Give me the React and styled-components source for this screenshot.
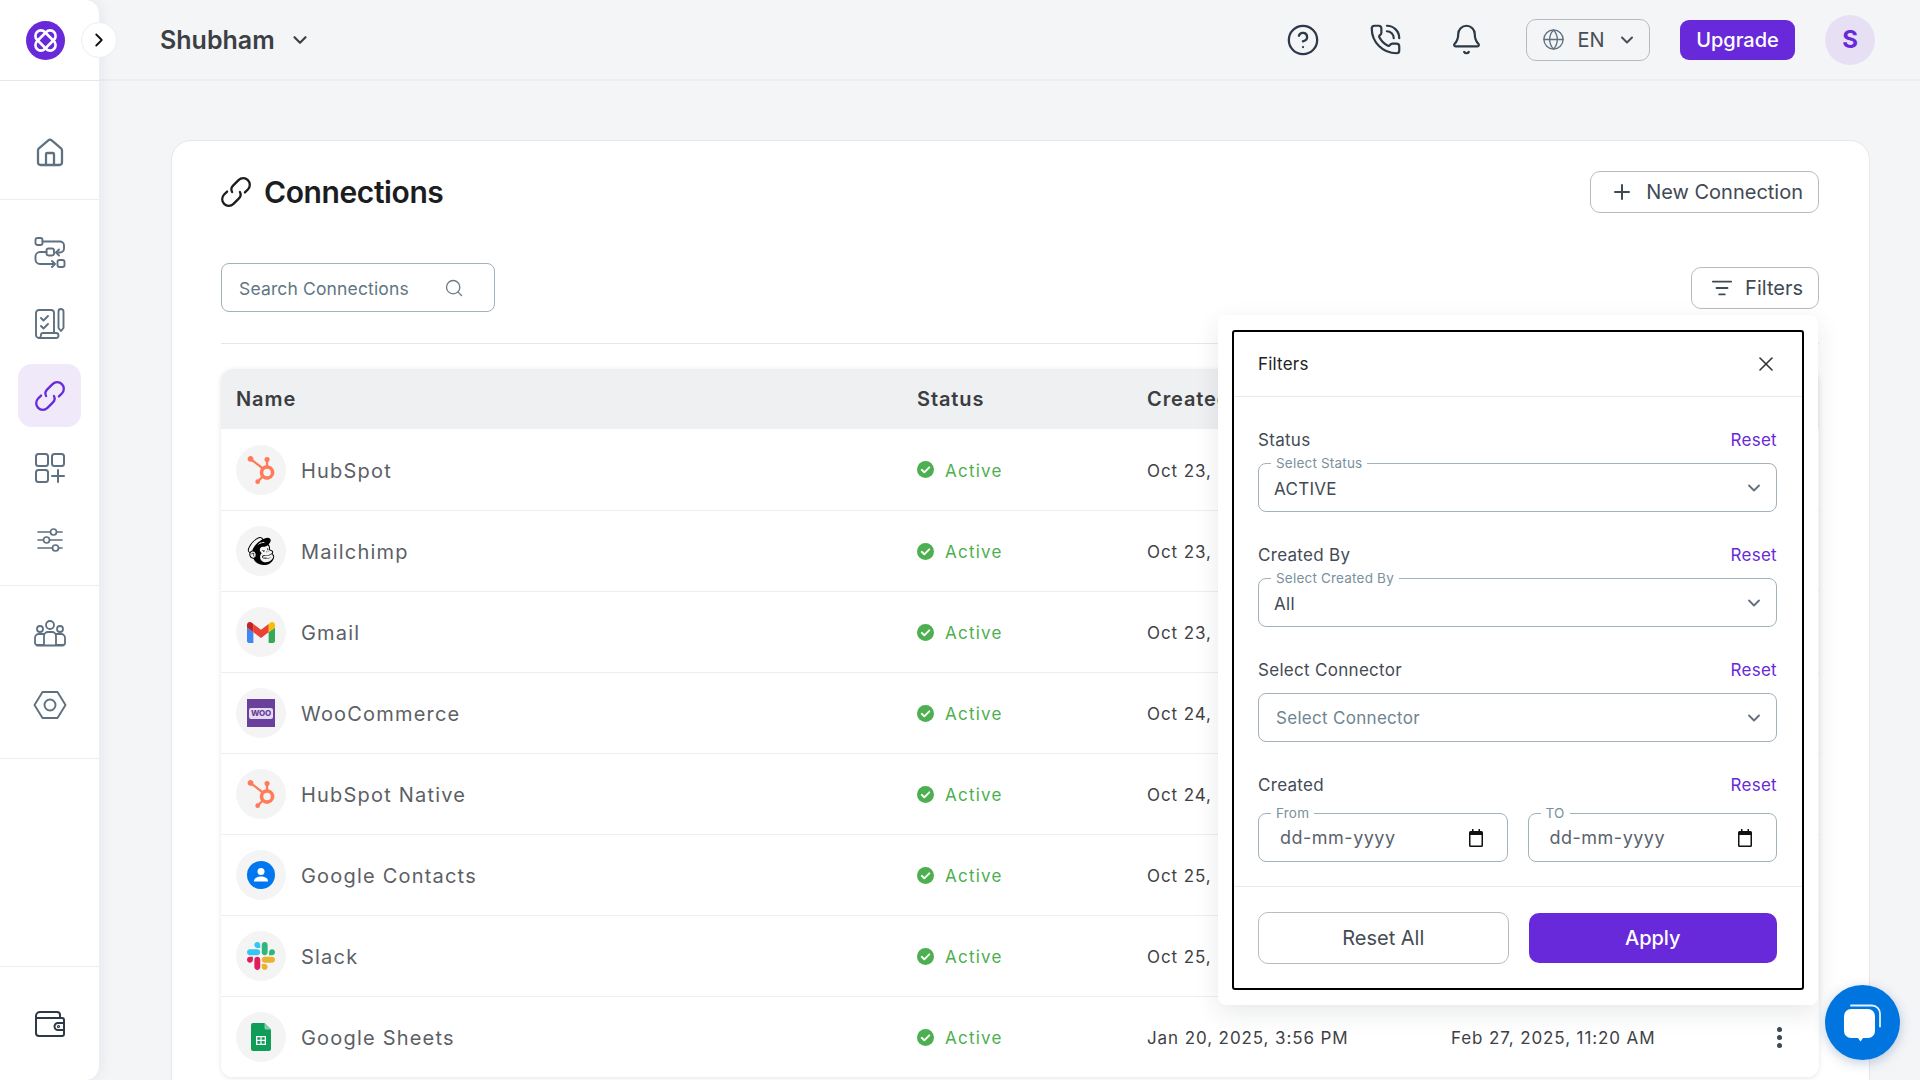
import React from "react";
import styled, { createGlobalStyle } from "styled-components";
import {
  Bell,
  ChevronDown,
  ChevronRight,
  CircleHelp,
  Globe,
  House,
  ListFilter,
  PhoneCall,
  Plus,
  Search,
  X,
} from "lucide-react";
import { SiHubspot, SiMailchimp } from "react-icons/si";

const purple = "#6729d9";
const slate = "#5f7080";

const GlobalStyle = createGlobalStyle`
  html, body {
    margin: 0;
    padding: 0;
    height: 100%;
    overflow: hidden;
  }
  body {
    background: #f4f5f7;
    font-family: "Inter", "Noto Sans", "Liberation Sans", sans-serif;
  }
  * { box-sizing: border-box; }
`;

const ChainIcon = () => (
  <svg width="30" height="30" viewBox="3.5 3.5 25 25" fill="none" stroke="currentColor" strokeWidth="1.9" strokeLinecap="round" strokeLinejoin="round">
    <g transform="rotate(-45 16 16)">
      <path d="M11 10.500H7.500a5.500 5.500 0 0 0 0 11H14a4.500 4.500 0 0 0 4.300-3.200" />
      <path d="M21 21.500h3.500a5.500 5.500 0 0 0 0-11H18a4.500 4.500 0 0 0-4.300 3.200" />
    </g>
  </svg>
);

const FlowIcon = () => (
  <svg width="32" height="32" viewBox="0 0 32 32" fill="none" stroke="currentColor" strokeWidth="1.9" strokeLinecap="round" strokeLinejoin="round">
    <rect x="1.5" y="2" width="7" height="7" rx="2" />
    <path d="M8.5 5.5H26a4 4 0 0 1 4 4v3a4 4 0 0 1-4 4h-3" />
    <path d="m25 13.5-3 3 3 3" />
    <rect x="12.5" y="12.5" width="7.500" height="7" rx="2" />
    <path d="M12.500 16H6a4.500 4.500 0 0 0-4.500 4.500v3A4.500 4.500 0 0 0 6 28h14" />
    <path d="m18 25 3 3-3 3" />
    <rect x="23.500" y="24" width="7" height="7" rx="2" />
  </svg>
);

const ChecklistIcon = () => (
  <svg width="30" height="32" viewBox="0 0 30 32" fill="none" stroke="currentColor" strokeWidth="1.9" strokeLinecap="round" strokeLinejoin="round">
    <path d="M4 30a3 3 0 0 1-3-3V5a3 3 0 0 1 3-3h12a3 3 0 0 1 3 3v20" />
    <path d="M4 30h17a2 2 0 0 0 0-5H8a2 2 0 0 0-2 2c0 1.500-1 3-2 3Z" />
    <path d="m6 10 2.500 2.500L13 8" />
    <path d="m6 18 2.500 2.500L13 16" />
    <path d="M23.500 3.500a2.500 2.500 0 0 1 5 0V20l-2.500 3-2.500-3Z" />
  </svg>
);

const AppsIcon = () => (
  <svg width="32" height="32" viewBox="0 0 32 32" fill="none" stroke="currentColor" strokeWidth="2" strokeLinecap="round" strokeLinejoin="round">
    <rect x="2" y="2" width="12" height="12" rx="2.500" />
    <rect x="18" y="2" width="12" height="12" rx="2.500" />
    <rect x="2" y="18" width="12" height="12" rx="2.500" />
    <path d="M24 18v12M18 24h12" />
  </svg>
);

const TuneIcon = () => (
  <svg width="26" height="26" viewBox="0 0 26 26" fill="none" stroke="currentColor" strokeWidth="1.7" strokeLinecap="round">
    <path d="M1 5h12M20 5h5M1 13h5M13 13h12M1 21h14M22 21h3" />
    <circle cx="16.500" cy="5" r="3" />
    <circle cx="9.500" cy="13" r="3" />
    <circle cx="18.500" cy="21" r="3" />
  </svg>
);

const TeamIcon = () => (
  <svg width="32" height="28" viewBox="0 0 32 28" fill="none" stroke="currentColor" strokeWidth="1.8" strokeLinecap="round" strokeLinejoin="round">
    <circle cx="16" cy="6" r="4" />
    <circle cx="6" cy="10" r="3" />
    <circle cx="26" cy="10" r="3" />
    <path d="M10 26V17a4 4 0 0 1 4-4h4a4 4 0 0 1 4 4v9" />
    <path d="M10 26H3a2 2 0 0 1-2-2v-5a4 4 0 0 1 4-4h5" />
    <path d="M22 26h7a2 2 0 0 0 2-2v-5a4 4 0 0 0-4-4h-5" />
    <path d="M3 26.500h26" />
  </svg>
);

const HexIcon = () => (
  <svg width="34" height="30" viewBox="0 0 34 30" fill="none" stroke="currentColor" strokeWidth="1.900" strokeLinejoin="round">
    <path d="M9.500 2h15l8 13-8 13h-15l-8-13Z" />
    <circle cx="17" cy="15" r="5.500" />
  </svg>
);

const WalletIcon = () => (
  <svg width="32" height="28" viewBox="0 0 32 28" fill="none" stroke="#2b3a46" strokeWidth="2" strokeLinecap="round" strokeLinejoin="round">
    <path d="M2 8V6a4 4 0 0 1 4-4h17a3 3 0 0 1 3 3v3" />
    <path d="M2 7v16a3 3 0 0 0 3 3h23a2 2 0 0 0 2-2V10a2 2 0 0 0-2-2H3" />
    <path d="M30 13h-6a3.500 3.500 0 0 0 0 7h6" />
    <circle cx="24.500" cy="16.500" r="0.600" />
  </svg>
);

const GmailLogo = () => (
  <svg width="28" height="21" viewBox="52 42 88 66">
    <path fill="#4285f4" d="M58 108h14V74L52 59v43c0 3.320 2.690 6 6 6" />
    <path fill="#34a853" d="M120 108h14c3.320 0 6-2.690 6-6V59l-20 15" />
    <path fill="#fbbc04" d="M120 48v26l20-15v-8c0-7.420-8.470-11.650-14.400-7.200" />
    <path fill="#ea4335" d="M72 74V48l24 18 24-18v26L96 92" />
    <path fill="#c5221f" d="M52 51v8l20 15V48l-5.600-4.200c-5.940-4.450-14.400-.22-14.400 7.200" />
  </svg>
);

const ContactsLogo = () => (
  <svg width="28" height="28" viewBox="0 0 28 28">
    <circle cx="14" cy="14" r="14" fill="#0077f0" />
    <circle cx="14" cy="10.500" r="3.500" fill="#fff" />
    <path d="M7 20c0-3 3.500-4.500 7-4.500s7 1.500 7 4.500v.5H7Z" fill="#fff" />
  </svg>
);

const SlackLogo = () => (
  <svg width="28" height="28" viewBox="0 0 122.800 122.800">
    <path fill="#e01e5a" d="M25.800 77.600c0 7.100-5.800 12.900-12.900 12.900S0 84.700 0 77.600s5.800-12.900 12.900-12.900h12.900v12.900zm6.500 0c0-7.100 5.800-12.900 12.900-12.900s12.900 5.800 12.900 12.900v32.300c0 7.100-5.800 12.900-12.900 12.900s-12.900-5.800-12.900-12.900V77.600z" />
    <path fill="#36c5f0" d="M45.200 25.800c-7.100 0-12.900-5.800-12.900-12.900S38.100 0 45.200 0s12.900 5.800 12.900 12.900v12.900H45.200zm0 6.500c7.100 0 12.900 5.800 12.900 12.900s-5.800 12.900-12.900 12.900H12.900C5.800 58.100 0 52.300 0 45.200s5.800-12.900 12.900-12.900h32.300z" />
    <path fill="#2eb67d" d="M97 45.200c0-7.100 5.800-12.900 12.900-12.900s12.900 5.800 12.900 12.900-5.800 12.900-12.900 12.900H97V45.200zm-6.500 0c0 7.100-5.800 12.900-12.900 12.900s-12.900-5.800-12.900-12.900V12.900C64.700 5.800 70.500 0 77.600 0s12.900 5.800 12.900 12.900v32.300z" />
    <path fill="#ecb22e" d="M77.600 97c7.100 0 12.900 5.800 12.900 12.900s-5.800 12.900-12.900 12.900-12.900-5.800-12.900-12.900V97h12.900zm0-6.500c-7.100 0-12.900-5.800-12.900-12.900s5.800-12.900 12.900-12.900h32.300c7.100 0 12.900 5.800 12.900 12.900s-5.800 12.900-12.900 12.900H77.600z" />
  </svg>
);

const SheetsLogo = () => (
  <svg width="20" height="28" viewBox="0 0 20 28">
    <path d="M2 0h11.500L20 6.500V26a2 2 0 0 1-2 2H2a2 2 0 0 1-2-2V2a2 2 0 0 1 2-2Z" fill="#0f9d58" />
    <path d="M13.500 0 20 6.500h-5a1.500 1.500 0 0 1-1.500-1.500Z" fill="#87ceac" />
    <path d="M5 13h10v9H5Zm1.300 1.300v2.500h3.100v-2.500Zm4.300 0v2.500h3.100v-2.500Zm-4.300 3.700v2.700h3.100V18Zm4.300 0v2.700h3.100V18Z" fill="#fff" fillRule="evenodd" />
  </svg>
);

const BrandMark = () => (
  <svg width="39" height="39" viewBox="0 0 39 39">
    <circle cx="19.500" cy="19.500" r="19.500" fill={purple} />
    <g fill="none" stroke="#fff" strokeWidth="2.600">
      <rect x="14" y="7.500" width="11" height="24" rx="5.500" transform="rotate(45 19.500 19.500)" />
      <rect x="14" y="7.500" width="11" height="24" rx="5.500" transform="rotate(-45 19.500 19.500)" />
    </g>
  </svg>
);

const CalendarIcon = () => (
  <svg width="14" height="18" viewBox="0 0 14 18">
    <path d="M3 0h1.500v2h5V0H11v2h1.500A1.500 1.500 0 0 1 14 3.500v13a1.500 1.500 0 0 1-1.500 1.500h-11A1.500 1.500 0 0 1 0 16.500v-13A1.500 1.500 0 0 1 1.500 2H3Zm-1.500 6v10.500h11V6Z" fill="#111" />
  </svg>
);

const CheckBadge = () => (
  <svg width="17" height="17" viewBox="0 0 17 17">
    <circle cx="8.500" cy="8.500" r="8.500" fill="#4caf50" />
    <path d="m4.700 8.800 2.600 2.500 5-5" fill="none" stroke="#fff" strokeWidth="1.900" strokeLinecap="round" strokeLinejoin="round" />
  </svg>
);

const ChatIcon = () => (
  <svg width="40" height="40" viewBox="0 0 40 40">
    <path d="M8 2.500h21a8 8 0 0 1 8 8v13" fill="none" stroke="#fff" strokeWidth="1.800" strokeLinecap="round" opacity="0.9" />
    <path d="M8 6h17a7 7 0 0 1 7 7v15a7 7 0 0 1-7 7h-5l-2.500 3.500L15 35H8a7 7 0 0 1-7-7V13a7 7 0 0 1 7-7Z" fill="#fff" />
  </svg>
);

const HubspotLogo = () => <SiHubspot size={28} color="#ff7a59" />;
const MailchimpLogo = () => <SiMailchimp size={28} color="#000" />;
const WooLogo = () => (
  <WooTile>
    <WooBadge>WOO</WooBadge>
  </WooTile>
);

const connections = [
  { name: "HubSpot", Logo: HubspotLogo, created: "Oct 23, 2024, 11:02 AM", updated: "Feb 27, 2025, 11:20 AM" },
  { name: "Mailchimp", Logo: MailchimpLogo, created: "Oct 23, 2024, 11:14 AM", updated: "Feb 27, 2025, 11:20 AM" },
  { name: "Gmail", Logo: GmailLogo, created: "Oct 23, 2024, 4:31 PM", updated: "Feb 27, 2025, 11:20 AM" },
  { name: "WooCommerce", Logo: WooLogo, created: "Oct 24, 2024, 10:05 AM", updated: "Feb 27, 2025, 11:20 AM" },
  { name: "HubSpot Native", Logo: HubspotLogo, created: "Oct 24, 2024, 2:47 PM", updated: "Feb 27, 2025, 11:20 AM" },
  { name: "Google Contacts", Logo: ContactsLogo, created: "Oct 25, 2024, 9:40 AM", updated: "Feb 27, 2025, 11:20 AM" },
  { name: "Slack", Logo: SlackLogo, created: "Oct 25, 2024, 1:12 PM", updated: "Feb 27, 2025, 11:20 AM" },
  { name: "Google Sheets", Logo: SheetsLogo, created: "Jan 20, 2025, 3:56 PM", updated: "Feb 27, 2025, 11:20 AM" },
];

const App = () => {
  return (
    <Page>
      <GlobalStyle />
      <Sidebar>
        <BrandRow>
          <BrandMark />
          <CollapseButton>
            <ChevronRight size={22} color="#111" strokeWidth={2} />
          </CollapseButton>
        </BrandRow>
        <NavGroup $height={119} $top={40}>
          <NavItem><House size={32} strokeWidth={1.7} /></NavItem>
        </NavGroup>
        <NavGroup $height={386} $top={20}>
          <NavItem><FlowIcon /></NavItem>
          <NavItem><ChecklistIcon /></NavItem>
          <NavItem $active><ChainIcon /></NavItem>
          <NavItem><AppsIcon /></NavItem>
          <NavItem><TuneIcon /></NavItem>
        </NavGroup>
        <NavGroup $height={173} $top={15}>
          <NavItem><TeamIcon /></NavItem>
          <NavItem><HexIcon /></NavItem>
        </NavGroup>
        <SidebarSpacer />
        <WalletSlot>
          <WalletIcon />
        </WalletSlot>
      </Sidebar>

      <Main>
        <Topbar>
          <WorkspaceSwitch>
            Shubham
            <ChevronDown size={22} strokeWidth={2.4} />
          </WorkspaceSwitch>
          <TopActions>
            <TopIcon $width={85}><CircleHelp size={34} strokeWidth={1.6} /></TopIcon>
            <TopIcon $width={81}><PhoneCall size={33} strokeWidth={1.6} /></TopIcon>
            <TopIcon $width={80}><Bell size={33} strokeWidth={1.6} /></TopIcon>
            <LangSelect>
              <Globe size={23} strokeWidth={1.4} color={slate} />
              EN
              <ChevronDown size={20} strokeWidth={2.4} />
            </LangSelect>
            <UpgradeButton>Upgrade</UpgradeButton>
            <Avatar>S</Avatar>
          </TopActions>
        </Topbar>

        <Content>
          <Card>
            <TitleRow>
              <PageTitle>
                <ChainIcon />
                Connections
              </PageTitle>
              <OutlineButton>
                <Plus size={24} strokeWidth={2} />
                New Connection
              </OutlineButton>
            </TitleRow>

            <ToolRow>
              <SearchBox>
                <SearchInput placeholder="Search Connections" readOnly />
                <Search size={20} strokeWidth={1.6} color="#6b7c88" />
              </SearchBox>
              <OutlineButton>
                <ListFilter size={22} strokeWidth={2} />
                Filters
              </OutlineButton>
            </ToolRow>
            <Divider />

            <Table>
              <HeadRow>
                <span>Name</span>
                <span>Status</span>
                <span>Created</span>
                <span>Updated</span>
                <span />
              </HeadRow>
              {connections.map(({ name, Logo, created, updated }) => (
                <Row key={name}>
                  <NameCell>
                    <LogoCircle><Logo /></LogoCircle>
                    <CellText>{name}</CellText>
                  </NameCell>
                  <StatusCell>
                    <CheckBadge />
                    <CellText>Active</CellText>
                  </StatusCell>
                  <DateCell>{created}</DateCell>
                  <DateCell>{updated}</DateCell>
                  <KebabCell>
                    <i /><i /><i />
                  </KebabCell>
                </Row>
              ))}
            </Table>

            <FilterPopover>
              <FilterPanel>
                <PanelHead>
                  Filters
                  <X size={24} strokeWidth={1.6} color="#333" />
                </PanelHead>
                <PanelBody>
                  <FilterGroup>
                    <FilterLabel>Status<ResetLink>Reset</ResetLink></FilterLabel>
                    <Field>
                      <FieldLegend>Select Status</FieldLegend>
                      <FieldValue $shift>ACTIVE</FieldValue>
                      <ChevronDown size={20} strokeWidth={2.2} color={slate} />
                    </Field>
                  </FilterGroup>
                  <FilterGroup>
                    <FilterLabel>Created By<ResetLink>Reset</ResetLink></FilterLabel>
                    <Field>
                      <FieldLegend>Select Created By</FieldLegend>
                      <FieldValue $shift>All</FieldValue>
                      <ChevronDown size={20} strokeWidth={2.2} color={slate} />
                    </Field>
                  </FilterGroup>
                  <FilterGroup>
                    <FilterLabel>Select Connector<ResetLink>Reset</ResetLink></FilterLabel>
                    <Field>
                      <FieldValue $muted>Select Connector</FieldValue>
                      <ChevronDown size={20} strokeWidth={2.2} color={slate} />
                    </Field>
                  </FilterGroup>
                  <FilterGroup>
                    <FilterLabel>Created<ResetLink>Reset</ResetLink></FilterLabel>
                    <DateFields>
                      <Field $date>
                        <FieldLegend>From</FieldLegend>
                        <DateValue>dd-mm-yyyy</DateValue>
                        <CalendarIcon />
                      </Field>
                      <Field $date>
                        <FieldLegend>TO</FieldLegend>
                        <DateValue>dd-mm-yyyy</DateValue>
                        <CalendarIcon />
                      </Field>
                    </DateFields>
                  </FilterGroup>
                </PanelBody>
                <PanelFoot>
                  <ResetAll>Reset All</ResetAll>
                  <ApplyButton>Apply</ApplyButton>
                </PanelFoot>
              </FilterPanel>
            </FilterPopover>
          </Card>
        </Content>
      </Main>

      <ChatBubble>
        <ChatIcon />
      </ChatBubble>
    </Page>
  );
};

const Page = styled.div`
  display: flex;
  width: 1920px;
  height: 1080px;
  overflow: hidden;
  background: #f4f5f7;
`;
const Sidebar = styled.aside`
  display: flex;
  flex-direction: column;
  flex: none;
  width: 99px;
  height: 1080px;
  background: #fff;
  border-radius: 0 14px 14px 0;
  box-shadow: 3px 0 14px rgba(30, 40, 60, 0.06);
  position: relative;
  z-index: 2;
`;
const BrandRow = styled.div`
  display: flex;
  align-items: center;
  height: 81px;
  padding-left: 26px;
  border-bottom: 1px solid #e6e7ea;
  position: relative;
`;
const CollapseButton = styled.div`
  position: absolute;
  left: 81px;
  top: 22px;
  display: flex;
  align-items: center;
  justify-content: center;
  width: 36px;
  height: 36px;
  border-radius: 50%;
  background: #fff;
  border: 1px solid #eceef0;
`;
const NavGroup = styled.div`
  display: flex;
  flex-direction: column;
  align-items: center;
  gap: 9px;
  height: ${(p) => p.$height}px;
  padding-top: ${(p) => p.$top}px;
  border-bottom: 1px solid #eceef0;
`;
const NavItem = styled.div`
  display: flex;
  align-items: center;
  justify-content: center;
  flex: none;
  width: 63px;
  height: 63px;
  border-radius: 14px;
  color: ${(p) => (p.$active ? purple : slate)};
  background: ${(p) => (p.$active ? "#f0e9fa" : "transparent")};
`;
const SidebarSpacer = styled.div`
  flex: 1;
  border-bottom: 1px solid #eceef0;
`;
const WalletSlot = styled.div`
  display: flex;
  align-items: center;
  justify-content: center;
  height: 113px;
`;
const Main = styled.main`
  display: flex;
  flex-direction: column;
  flex: 1;
  min-width: 0;
`;
const Topbar = styled.header`
  display: flex;
  align-items: center;
  justify-content: space-between;
  flex: none;
  height: 81px;
  padding: 0 45px 0 61px;
  border-bottom: 2px solid #eceef0;
`;
const WorkspaceSwitch = styled.div`
  display: flex;
  align-items: center;
  gap: 14px;
  font-size: 25px;
  font-weight: 600;
  color: #3c3f44;
`;
const TopActions = styled.div`
  display: flex;
  align-items: center;
`;
const TopIcon = styled.div`
  display: flex;
  align-items: center;
  justify-content: center;
  width: ${(p) => p.$width}px;
  color: #2b3a46;
`;
const LangSelect = styled.div`
  display: flex;
  align-items: center;
  justify-content: space-between;
  width: 124px;
  height: 42px;
  margin-left: 20px;
  padding: 0 12px 0 15px;
  font-size: 20px;
  color: #4a4f55;
  border: 1px solid #b8bcc0;
  border-radius: 10px;
`;
const UpgradeButton = styled.button`
  width: 115px;
  height: 40px;
  margin-left: 30px;
  font-family: inherit;
  font-size: 20px;
  font-weight: 500;
  color: #fff;
  background: ${purple};
  border: none;
  border-radius: 9px;
`;
const Avatar = styled.div`
  display: flex;
  align-items: center;
  justify-content: center;
  width: 50px;
  height: 50px;
  margin-left: 30px;
  font-size: 24px;
  font-weight: 700;
  color: ${purple};
  background: #e7e0f5;
  border-radius: 50%;
`;
const Content = styled.div`
  flex: 1;
  min-height: 0;
  padding: 59px 50px 0 72px;
`;
const Card = styled.section`
  position: relative;
  height: 1000px;
  padding: 30px 50px 0 49px;
  background: #fff;
  border: 1px solid #e6e7ea;
  border-radius: 20px;
`;
const TitleRow = styled.div`
  display: flex;
  align-items: center;
  justify-content: space-between;
  height: 42px;
`;
const PageTitle = styled.h1`
  display: flex;
  align-items: center;
  gap: 13px;
  margin: 0;
  font-size: 30px;
  font-weight: 600;
  letter-spacing: -0.4px;
  color: #1c1d1f;
`;
const OutlineButton = styled.button`
  display: flex;
  align-items: center;
  gap: 12px;
  height: 42px;
  padding: 0 15px 0 19px;
  font-family: inherit;
  font-size: 20px;
  color: #3f4a54;
  background: #fff;
  border: 1px solid #b8bcc0;
  border-radius: 10px;
`;
const ToolRow = styled.div`
  display: flex;
  align-items: center;
  justify-content: space-between;
  height: 49px;
  margin-top: 50px;
`;
const SearchBox = styled.div`
  display: flex;
  align-items: center;
  width: 274px;
  height: 49px;
  padding: 0 30px 0 17px;
  border: 1px solid #a3b1ba;
  border-radius: 8px;
`;
const SearchInput = styled.input`
  flex: 1;
  min-width: 0;
  padding: 2px 0 0;
  font-family: inherit;
  font-size: 17.5px;
  letter-spacing: 0.15px;
  color: #5f7080;
  background: none;
  border: none;
  outline: none;
  &::placeholder {
    color: #5f7685;
  }
`;
const Divider = styled.div`
  height: 1px;
  margin: 31px 0 25px;
  background: #e6e7ea;
`;
const Table = styled.div`
  border-radius: 12px;
  box-shadow: 0 1px 5px rgba(30, 40, 60, 0.12);
  overflow: hidden;
`;
const columns = "681px 230px 304px 1fr 40px";
const HeadRow = styled.div`
  display: grid;
  grid-template-columns: ${columns};
  align-items: center;
  height: 60px;
  padding: 0 20px 0 15px;
  font-size: 20px;
  font-weight: 600;
  letter-spacing: 0.9px;
  color: #3b3d41;
  background: #eff0f2;
`;
const Row = styled.div`
  display: grid;
  grid-template-columns: ${columns};
  align-items: center;
  height: 81px;
  padding: 0 20px 0 15px;
  background: #fff;
  border-top: 1px solid #eceef0;
  &:nth-child(2) {
    border-top: none;
  }
`;
const CellText = styled.span`
  padding-top: 2px;
`;
const NameCell = styled.div`
  display: flex;
  align-items: center;
  gap: 15px;
  font-size: 20px;
  letter-spacing: 1.2px;
  color: #5c5f66;
`;
const LogoCircle = styled.div`
  display: flex;
  align-items: center;
  justify-content: center;
  flex: none;
  width: 50px;
  height: 50px;
  background: #f4f4f4;
  border-radius: 50%;
`;
const WooTile = styled.div`
  display: flex;
  align-items: center;
  justify-content: center;
  width: 28px;
  height: 28px;
  background: #6b3f9c;
`;
const WooBadge = styled.span`
  padding: 1px 2px;
  font-size: 8px;
  font-weight: 800;
  line-height: 9px;
  letter-spacing: -0.2px;
  color: #6b3f9c;
  background: #e4dcf0;
  border-radius: 2px;
`;
const StatusCell = styled.div`
  display: flex;
  align-items: center;
  gap: 11px;
  font-size: 17px;
  letter-spacing: 1.25px;
  color: #4caf50;
`;
const DateCell = styled.div`
  padding-top: 2px;
  font-size: 17px;
  letter-spacing: 0.9px;
  color: #3f4145;
`;
const KebabCell = styled.div`
  display: flex;
  flex-direction: column;
  align-items: center;
  gap: 3px;
  i {
    width: 5px;
    height: 5px;
    background: #3a4a56;
    border-radius: 50%;
  }
`;
const FilterPopover = styled.div`
  position: absolute;
  top: 174px;
  right: 51px;
  width: 600px;
  height: 690px;
  padding: 15px 14px;
  background: #fff;
  border-radius: 8px;
  box-shadow: 0 8px 24px rgba(30, 40, 60, 0.1);
`;
const FilterPanel = styled.div`
  display: flex;
  flex-direction: column;
  height: 100%;
  border: 2px solid #000;
  border-radius: 3px;
`;
const PanelHead = styled.div`
  display: flex;
  align-items: center;
  justify-content: space-between;
  flex: none;
  height: 65px;
  padding: 0 24px;
  font-size: 17px;
  letter-spacing: 0.2px;
  color: #222;
  border-bottom: 1px solid #e9eaec;
`;
const PanelBody = styled.div`
  display: flex;
  flex-direction: column;
  gap: 33px;
  flex: 1;
  padding: 33px 25px 0 24px;
`;
const FilterGroup = styled.div`
  display: flex;
  flex-direction: column;
  gap: 13px;
`;
const FilterLabel = styled.div`
  display: flex;
  align-items: center;
  justify-content: space-between;
  height: 20px;
  font-size: 17px;
  letter-spacing: 0.3px;
  color: #444b55;
`;
const ResetLink = styled.span`
  color: ${purple};
`;
const Field = styled.div`
  position: relative;
  display: flex;
  align-items: center;
  justify-content: space-between;
  flex: 1 0 49px;
  height: 49px;
  padding: 0 ${(p) => (p.$date ? "24px" : "12px")} 0 17px;
  border: 1px solid #a3b1ba;
  border-radius: 8px;
`;
const FieldLegend = styled.span`
  position: absolute;
  left: 12px;
  top: -9px;
  padding: 0 5px;
  font-size: 13.5px;
  line-height: 16px;
  letter-spacing: 0.2px;
  color: #7a909c;
  background: #fff;
`;
const FieldValue = styled.span`
  margin-left: ${(p) => (p.$shift ? "-2px" : "0")};
  padding-top: ${(p) => (p.$shift ? "2px" : "0")};
  font-size: 17px;
  letter-spacing: 0.3px;
  color: ${(p) => (p.$muted ? "#6e8591" : "#3f4a54")};
`;
const DateFields = styled.div`
  display: flex;
  gap: 20px;
  margin-top: 5px;
`;
const DateValue = styled.span`
  margin-left: 4px;
  font-size: 18px;
  letter-spacing: 0.5px;
  color: #59636d;
`;
const PanelFoot = styled.div`
  display: flex;
  align-items: center;
  gap: 20px;
  flex: none;
  height: 102px;
  padding: 0 25px 0 24px;
  border-top: 1px solid #e9eaec;
`;
const ResetAll = styled.button`
  flex: 1;
  height: 52px;
  font-family: inherit;
  font-size: 20px;
  color: #444b55;
  background: #fff;
  border: 1px solid #b8bcc0;
  border-radius: 10px;
`;
const ApplyButton = styled.button`
  flex: 1;
  height: 50px;
  font-family: inherit;
  font-size: 20px;
  font-weight: 500;
  color: #fff;
  background: ${purple};
  border: none;
  border-radius: 10px;
`;
const ChatBubble = styled.div`
  position: absolute;
  left: 1825px;
  top: 985px;
  display: flex;
  align-items: center;
  justify-content: center;
  width: 75px;
  height: 75px;
  background: #0075e0;
  border-radius: 50%;
  box-shadow: 0 3px 12px rgba(0, 60, 130, 0.25);
`;

export default App;
